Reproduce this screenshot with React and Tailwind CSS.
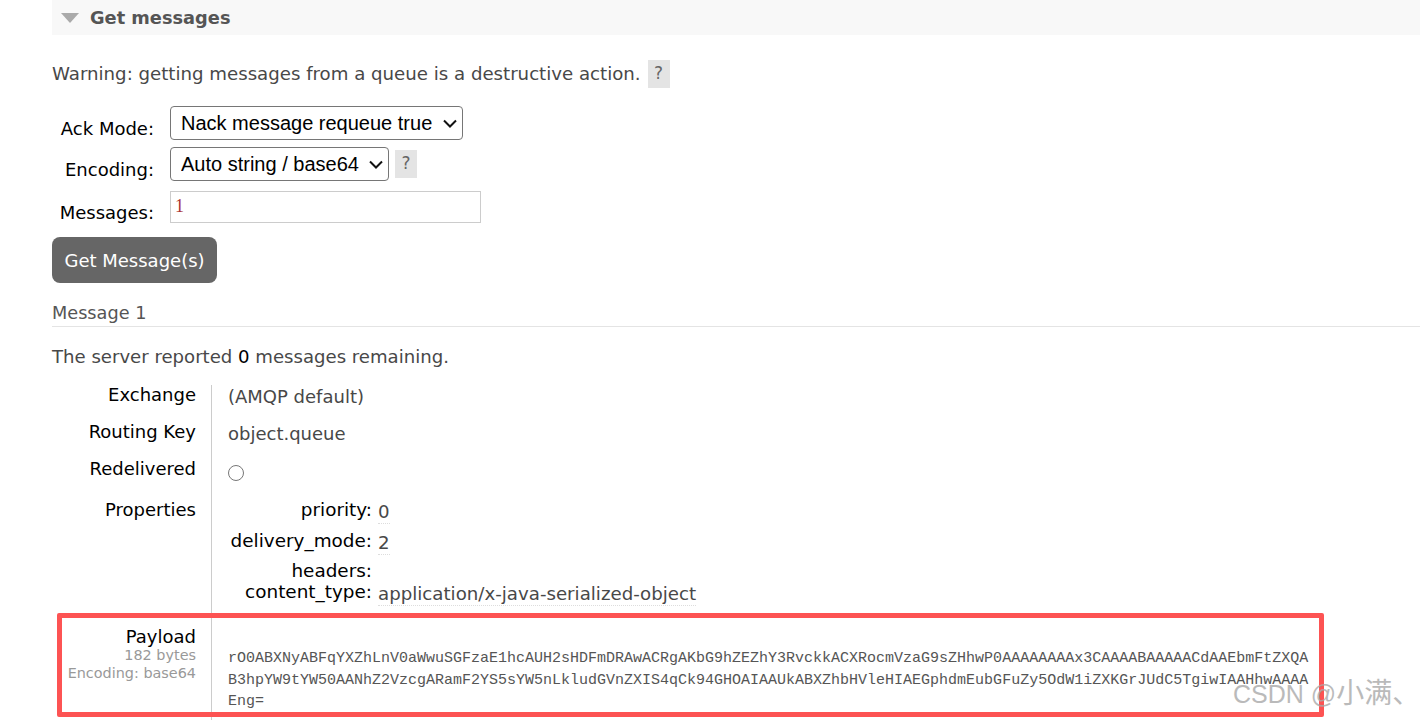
const Help = ({ className = "" }) => (
  <span className={`flex h-7 w-[22px] items-center justify-center bg-[#e4e4e4] text-[17px] text-[#666] ${className}`}>?</span>
)

const Select = ({ width, children }) => (
  <div className="relative" style={{ width }}>
    <select className="block h-[34px] w-full appearance-none rounded-[4px] border border-[#767676] bg-white pl-[10px] font-['Liberation_Sans',sans-serif] text-[20px] text-black">
      <option>{children}</option>
    </select>
    <svg width="14" height="9" viewBox="0 0 14 9" fill="none" className="pointer-events-none absolute right-[6px] top-[13px]">
      <path d="M1 1.5l6 6 6-6" stroke="#111" strokeWidth="2" />
    </svg>
  </div>
)

const FormRow = ({ label, height, children }) => (
  <div className="flex items-center gap-4" style={{ height }}>
    <label className="mt-[12px] w-[102px] text-right text-black">{label}</label>
    {children}
  </div>
)

const DetailRow = ({ label, height, children, sub }) => (
  <div className="flex" style={{ height }}>
    <div className="w-[160px] shrink-0 border-r border-[#ccc] pr-[15px] text-right text-[18px] text-black">
      <div className="h-[22px] leading-[20px]">{label}</div>
      {sub}
    </div>
    <div className="pl-4">{children}</div>
  </div>
)

const Prop = ({ name, value, height, underline = true }) => (
  <div className="flex" style={{ height }}>
    <div className="w-[145px] text-right text-[18.4px] leading-[20px] text-black">{name}</div>
    <div className={`ml-[6px] h-[24px] text-[18.2px] leading-[24px] ${underline ? "border-b border-dotted border-[#ddd]" : ""}`}>{value}</div>
  </div>
)

const App = () => {
  return (
    <div className="relative h-[720px] w-[1420px] overflow-hidden bg-white pl-[52px] font-['DejaVu_Sans',sans-serif] text-[18px] text-[#484848]">
      <div className="flex h-[35px] items-center bg-[#f8f8f8] pl-[9px] pt-px text-[17.8px] font-bold text-[#555]">
        <svg width="18" height="12" viewBox="0 0 18 12" className="mr-[11px]">
          <path d="M0 1h18L9 11z" fill="#aaa" />
        </svg>
        Get messages
      </div>

      <div className="mt-[25px] flex h-[28px] items-center">
        <span className="text-[18.17px]">Warning: getting messages from a queue is a destructive action.</span>
        <Help className="ml-[7px]" />
      </div>

      <div className="mt-[16px]">
        <FormRow label="Ack Mode:" height={37}>
          <Select width={293}>Nack message requeue true</Select>
        </FormRow>
        <div className="mt-[4px]">
          <FormRow label="Encoding:" height={37}>
            <Select width={219}>Auto string / base64</Select>
            <Help className="-ml-[10px]" />
          </FormRow>
        </div>
        <div className="mt-[6px]">
          <FormRow label="Messages:" height={37}>
            <div className="h-[32px] w-[311px] border border-[#ccc] pl-[4px] font-['Liberation_Serif',serif] text-[18px] leading-[28px] text-[#a33]">1</div>
          </FormRow>
        </div>
      </div>

      <button className="mt-[12px] block h-[46px] w-[165px] rounded-[8px] bg-[#666] text-white">Get Message(s)</button>

      <div className="mt-[18px] h-[26px] border-b border-[#e4e4e4] text-[17.7px] leading-[25px] text-[#555]">Message 1</div>

      <p className="mt-[18px] h-[24px] text-[18.1px] leading-[24px]">
        The server reported <b className="font-normal text-black">0</b> messages remaining.
      </p>

      <div className="mt-[16px]">
        <DetailRow label="Exchange" height={37}><div className="leading-[24px]">(AMQP default)</div></DetailRow>
        <DetailRow label="Routing Key" height={37}><div className="leading-[24px]">object.queue</div></DetailRow>
        <DetailRow label="Redelivered" height={41}>
          <div className="mt-[6px] h-4 w-4 rounded-full border border-[#777]" />
        </DetailRow>
        <DetailRow label="Properties" height={127}>
          <div className="-ml-px">
            <Prop name="priority:" value="0" height={31} />
            <Prop name="delivery_mode:" value="2" height={30} />
            <Prop name="headers:" value="" height={21} underline={false} />
            <Prop name="content_type:" value="application/x-java-serialized-object" height={24} />
          </div>
        </DetailRow>
        <DetailRow
          label="Payload"
          height={120}
          sub={
            <div className="-mt-[2px] text-[14.4px] text-[#999]">
              <div className="h-[17px] leading-[17px]">182 bytes</div>
              <div className="mt-[1px] h-[17px] leading-[17px]">Encoding: base64</div>
            </div>
          }
        >
          <div className="mt-[14px] pt-[7px] font-['Liberation_Mono',monospace] text-[15px] leading-[21.5px] text-[#555]">
            <div>rO0ABXNyABFqYXZhLnV0aWwuSGFzaE1hcAUH2sHDFmDRAwACRgAKbG9hZEZhY3RvckkACXRocmVzaG9sZHhwP0AAAAAAAAx3CAAAABAAAAACdAAEbmFtZXQA</div>
            <div>B3hpYW9tYW50AANhZ2VzcgARamF2YS5sYW5nLkludGVnZXIS4qCk94GHOAIAAUkABXZhbHVleHIAEGphdmEubGFuZy5OdW1iZXKGrJUdC5TgiwIAAHhwAAAA</div>
            <div>Eng=</div>
          </div>
        </DetailRow>
      </div>

      {/* annotation over the payload row */}
      <div className="absolute left-[57px] top-[613px] h-[104px] w-[1267px] rounded-[2px] border-[5px] border-[#fd5353]" />
      <div className="absolute left-[1233px] top-[676px] whitespace-nowrap font-['Liberation_Sans','Noto_Sans_CJK_SC',sans-serif] text-[25px] leading-[36px] text-[#aaa] opacity-80">
        CSDN @<span className="text-[28px]">小满、</span>
      </div>
    </div>
  )
}

export default App
